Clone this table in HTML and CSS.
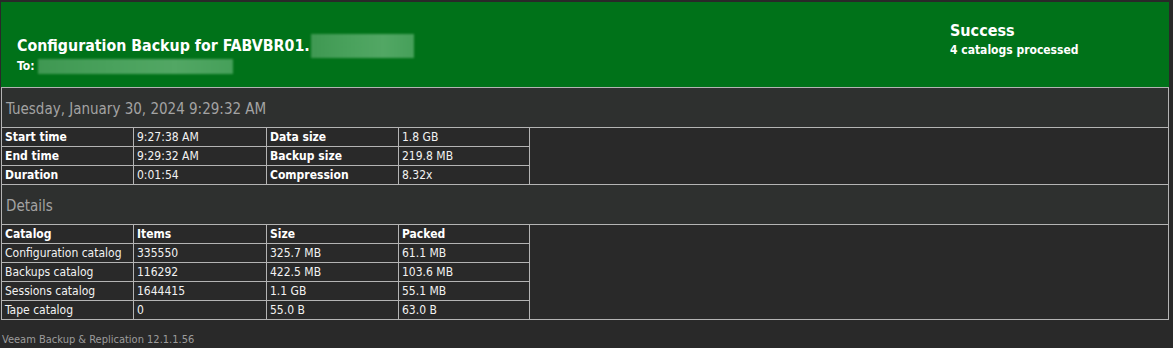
FILE: index.html
```html
<!DOCTYPE html>
<html lang="en">
<head>
    <meta charset="UTF-8">
    <title>Configuration Backup Report</title>
    <link rel="stylesheet" href="styles.css">
</head>
<body>
    <div class="report">
        <div class="header">
            <div class="job">
                <div class="job-title">Configuration Backup for FABVBR01.<span class="masked masked-host"></span></div>
                <div class="job-to">To: <span class="masked masked-mail"></span></div>
            </div>
            <div class="status">
                <div class="status-title">Success</div>
                <div class="status-sub">4 catalogs processed</div>
            </div>
        </div>

        <table class="summary">
            <colgroup>
                <col class="c1"><col class="c2"><col class="c3"><col class="c4"><col>
            </colgroup>
            <tr>
                <td colspan="5" class="section">Tuesday, January 30, 2024 9:29:32 AM</td>
            </tr>
            <tr>
                <td class="label">Start time</td>
                <td>9:27:38 AM</td>
                <td class="label">Data size</td>
                <td>1.8 GB</td>
                <td rowspan="3"></td>
            </tr>
            <tr>
                <td class="label">End time</td>
                <td>9:29:32 AM</td>
                <td class="label">Backup size</td>
                <td>219.8 MB</td>
            </tr>
            <tr>
                <td class="label">Duration</td>
                <td>0:01:54</td>
                <td class="label">Compression</td>
                <td>8.32x</td>
            </tr>
            <tr>
                <td colspan="5" class="section">Details</td>
            </tr>
            <tr>
                <td class="label">Catalog</td>
                <td class="label">Items</td>
                <td class="label">Size</td>
                <td class="label">Packed</td>
                <td rowspan="5"></td>
            </tr>
            <tr>
                <td>Configuration catalog</td>
                <td>335550</td>
                <td>325.7 MB</td>
                <td>61.1 MB</td>
            </tr>
            <tr>
                <td>Backups catalog</td>
                <td>116292</td>
                <td>422.5 MB</td>
                <td>103.6 MB</td>
            </tr>
            <tr>
                <td>Sessions catalog</td>
                <td>1644415</td>
                <td>1.1 GB</td>
                <td>55.1 MB</td>
            </tr>
            <tr>
                <td>Tape catalog</td>
                <td>0</td>
                <td>55.0 B</td>
                <td>63.0 B</td>
            </tr>
        </table>
    </div>

    <div class="footer">Veeam Backup &amp; Replication 12.1.1.56</div>
</body>
</html>
```

FILE: styles.css
```css
body {
    margin: 0;
    background: #292929;
    color: #ffffff;
    font-family: "DejaVu Sans Condensed", "DejaVu Sans", sans-serif;
}
.report {
    width: 1168px;
    margin: 2px 0 0 1px;
}
.header {
    display: flex;
    height: 85px;
    background: #007219;
}
.job {
    padding: 32px 0 0 16px;
    flex: 1;
}
.job-title {
    font-size: 15.8px;
    font-weight: bold;
    line-height: 20px;
    display: flex;
    align-items: center;
}
.job-to {
    font-size: 12px;
    font-weight: bold;
    line-height: 16px;
    display: flex;
    align-items: center;
}
/* blurred-out host name and recipient */
.masked {
    display: inline-block;
    background: linear-gradient(90deg, #3f9852, #4aa25d 40%, #52a764 70%, #46a05a);
    filter: blur(1px);
}
.masked-host {
    width: 103px;
    height: 24px;
    margin-left: 1px;
}
.masked-mail {
    width: 195px;
    height: 15px;
    margin-left: 3px;
}
.status {
    width: 219px;
    padding-top: 19px;
}
.status-title {
    font-size: 16px;
    font-weight: bold;
    line-height: 20px;
}
.status-sub {
    font-size: 12px;
    font-weight: bold;
    line-height: 18px;
}
.summary {
    width: 1168px;
    border-collapse: collapse;
    table-layout: fixed;
    border: 1px solid #b4b4b4;
}
.summary col.c1 { width: 132px; }
.summary col.c2 { width: 133px; }
.summary col.c3 { width: 132px; }
.summary col.c4 { width: 131px; }
.summary td {
    border: 1px solid #b4b4b4;
    height: 18px;
    padding: 0 0 0 3px;
    font-size: 12px;
    line-height: 16px;
    color: #f2f2f2;
    white-space: nowrap;
}
.summary td.label {
    font-weight: bold;
    color: #ffffff;
}
.summary td.section {
    height: 37px;
    padding: 2px 0 0 4px;
    background: #2e302f;
    font-size: 15px;
    color: #a3a3a3;
}
.footer {
    padding: 13px 0 0 2px;
    font-size: 11px;
    color: #9c9c9c;
}
```
